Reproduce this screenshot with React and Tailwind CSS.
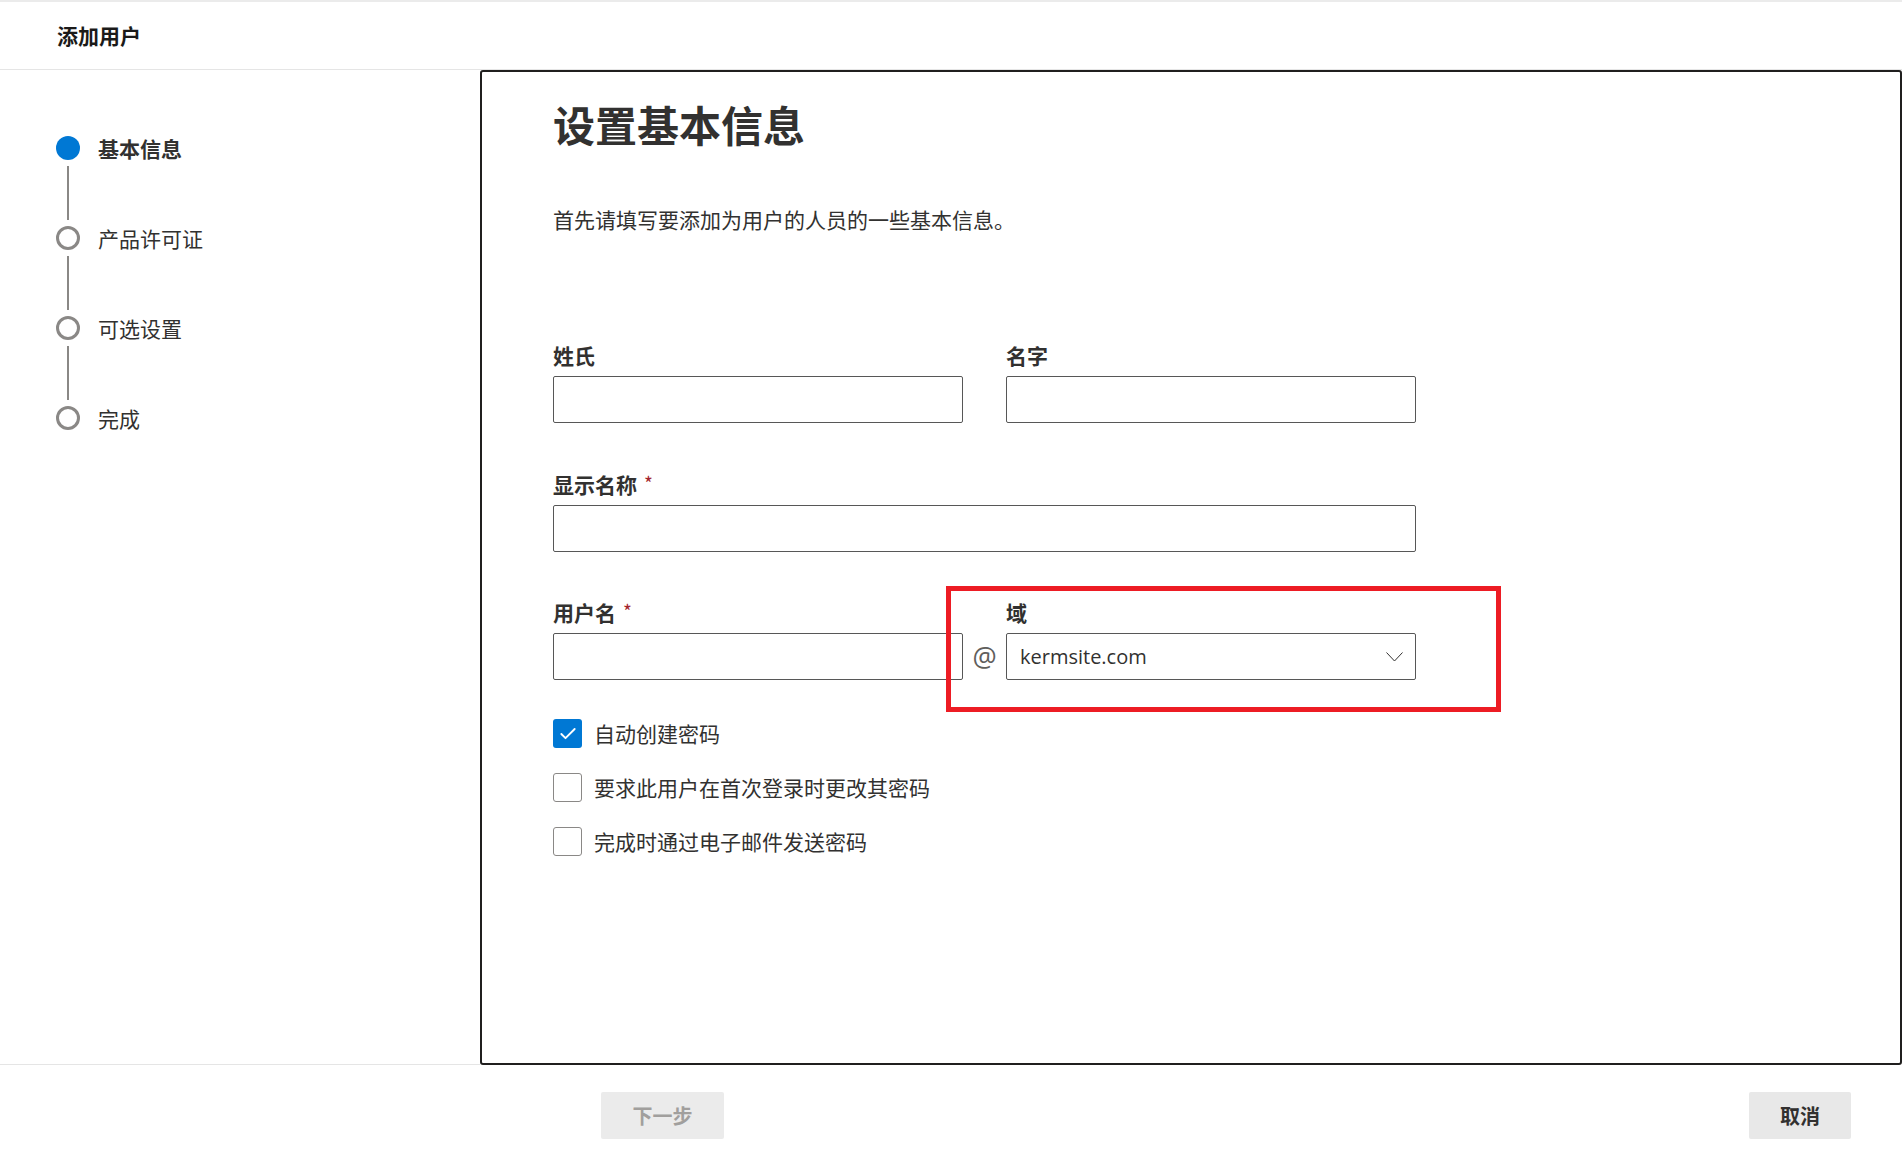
import { Check } from 'lucide-react';

var steps = [
  { label: '基本信息', active: true },
  { label: '产品许可证' },
  { label: '可选设置' },
  { label: '完成' },
];

function StepList() {
  return (
    <div className="pt-[66px] pl-[56px]">
      {steps.map(function (s, i) {
        return (
          <div key={s.label}>
            {i > 0 && (
              <div className="w-[24px] h-[66px] flex justify-center py-[6px]">
                <div className="w-[2px] h-full bg-[#8a8886]" />
              </div>
            )}
            <div className="flex items-center h-[24px]">
              {s.active ? (
                <div className="w-[24px] h-[24px] rounded-full bg-[#0078d4]" />
              ) : (
                <div className="w-[24px] h-[24px] rounded-full border-[3px] border-[#8a8886] bg-white" />
              )}
              <span className={'ml-[18px] text-[21px] leading-[26px] text-[#323130] ' + (s.active ? 'font-bold' : '')}>
                {s.label}
              </span>
            </div>
          </div>
        );
      })}
    </div>
  );
}

function Label({ text, required }) {
  return (
    <div className="h-[28px] mb-[5px] flex items-start">
      <span className="text-[21px] leading-[25px] font-bold text-[#323130]">{text}</span>
      {required && <span className="ml-[7px] text-[19px] leading-[22px] text-[#a4262c]">*</span>}
    </div>
  );
}

function TextBox() {
  return <div className="h-[47px] border border-[#575757] rounded-[2px] bg-white" />;
}

function CheckRow({ label, checked }) {
  return (
    <div className="flex items-center h-[29px]">
      {checked ? (
        <div className="w-[29px] h-[29px] rounded-[3px] bg-[#0078d4] flex items-center justify-center">
          <Check size={20} strokeWidth={2.25} color="#ffffff" />
        </div>
      ) : (
        <div className="w-[29px] h-[29px] rounded-[3px] border border-[#8a8886] bg-white" />
      )}
      <span className="ml-[12px] text-[21px] leading-[29px] text-[#323130]">{label}</span>
    </div>
  );
}

export default function App() {
  return (
    <div className="relative w-[1902px] h-[1159px] bg-white overflow-hidden flex flex-col font-['Noto_Sans_CJK_SC','Noto_Sans',sans-serif]">
      <div className="h-[2px] bg-[#ebebeb] shrink-0" />
      <header className="h-[68px] shrink-0 border-b border-[#e5e5e5] flex items-center pl-[57px] pb-[2px]">
        <h1 className="text-[21px] leading-[28px] font-bold text-[#1b1a19]">添加用户</h1>
      </header>

      <div className="flex h-[995px] shrink-0">
        <aside className="w-[480px] shrink-0 border-b border-[#e5e5e5]">
          <StepList />
        </aside>

        <main className="flex-1 border-2 border-[#201f1e] rounded-[3px] pl-[71px] pt-[24px]">
          <h2 className="text-[42px] leading-[56px] font-bold text-[#323130]">设置基本信息</h2>
          <p className="mt-[53px] text-[21px] leading-[28px] text-[#323130]">首先请填写要添加为用户的人员的一些基本信息。</p>

          <div className="w-[863px] mt-[110px]">
            <div className="grid grid-cols-2 gap-x-[43px]">
              <div>
                <Label text="姓氏" />
                <TextBox />
              </div>
              <div>
                <Label text="名字" />
                <TextBox />
              </div>
            </div>

            <div className="mt-[49px]">
              <Label text="显示名称" required />
              <TextBox />
            </div>

            <div className="mt-[48px] flex">
              <div className="w-[410px]">
                <Label text="用户名" required />
                <TextBox />
              </div>
              <div className="w-[43px] pt-[33px] h-[80px] flex items-center justify-center">
                <span className="text-[27px] leading-[47px] text-[#605e5c] font-['Open_Sans',sans-serif]">@</span>
              </div>
              <div className="w-[410px]">
                <Label text="域" />
                <div className="h-[47px] border border-[#575757] rounded-[2px] bg-white flex items-center pl-[13px] pr-[12px]">
                  <span className="flex-1 text-[20px] text-[#323130] font-['Open_Sans',sans-serif]">kermsite.com</span>
                  <svg width="17" height="10" viewBox="0 0 17 10" fill="none">
                    <polyline points="0.5,0.5 8.5,9 16.5,0.5" stroke="#323130" strokeWidth="1" />
                  </svg>
                </div>
              </div>
            </div>

            <div className="mt-[39px] flex flex-col gap-[25px]">
              <CheckRow label="自动创建密码" checked />
              <CheckRow label="要求此用户在首次登录时更改其密码" />
              <CheckRow label="完成时通过电子邮件发送密码" />
            </div>
          </div>
        </main>
      </div>

      <footer className="flex-1 flex items-start pt-[27px]">
        <button className="ml-[601px] w-[123px] h-[47px] rounded-[2px] bg-[#ebebeb] text-[20px] font-bold text-[#a19f9d]">下一步</button>
        <button className="ml-auto mr-[51px] w-[102px] h-[47px] rounded-[2px] bg-[#e8e8e8] text-[20px] font-bold text-[#323130]">取消</button>
      </footer>

      <div className="absolute left-[946px] top-[586px] w-[555px] h-[126px] border-[5px] border-[#ed1c24] pointer-events-none" />
    </div>
  );
}
